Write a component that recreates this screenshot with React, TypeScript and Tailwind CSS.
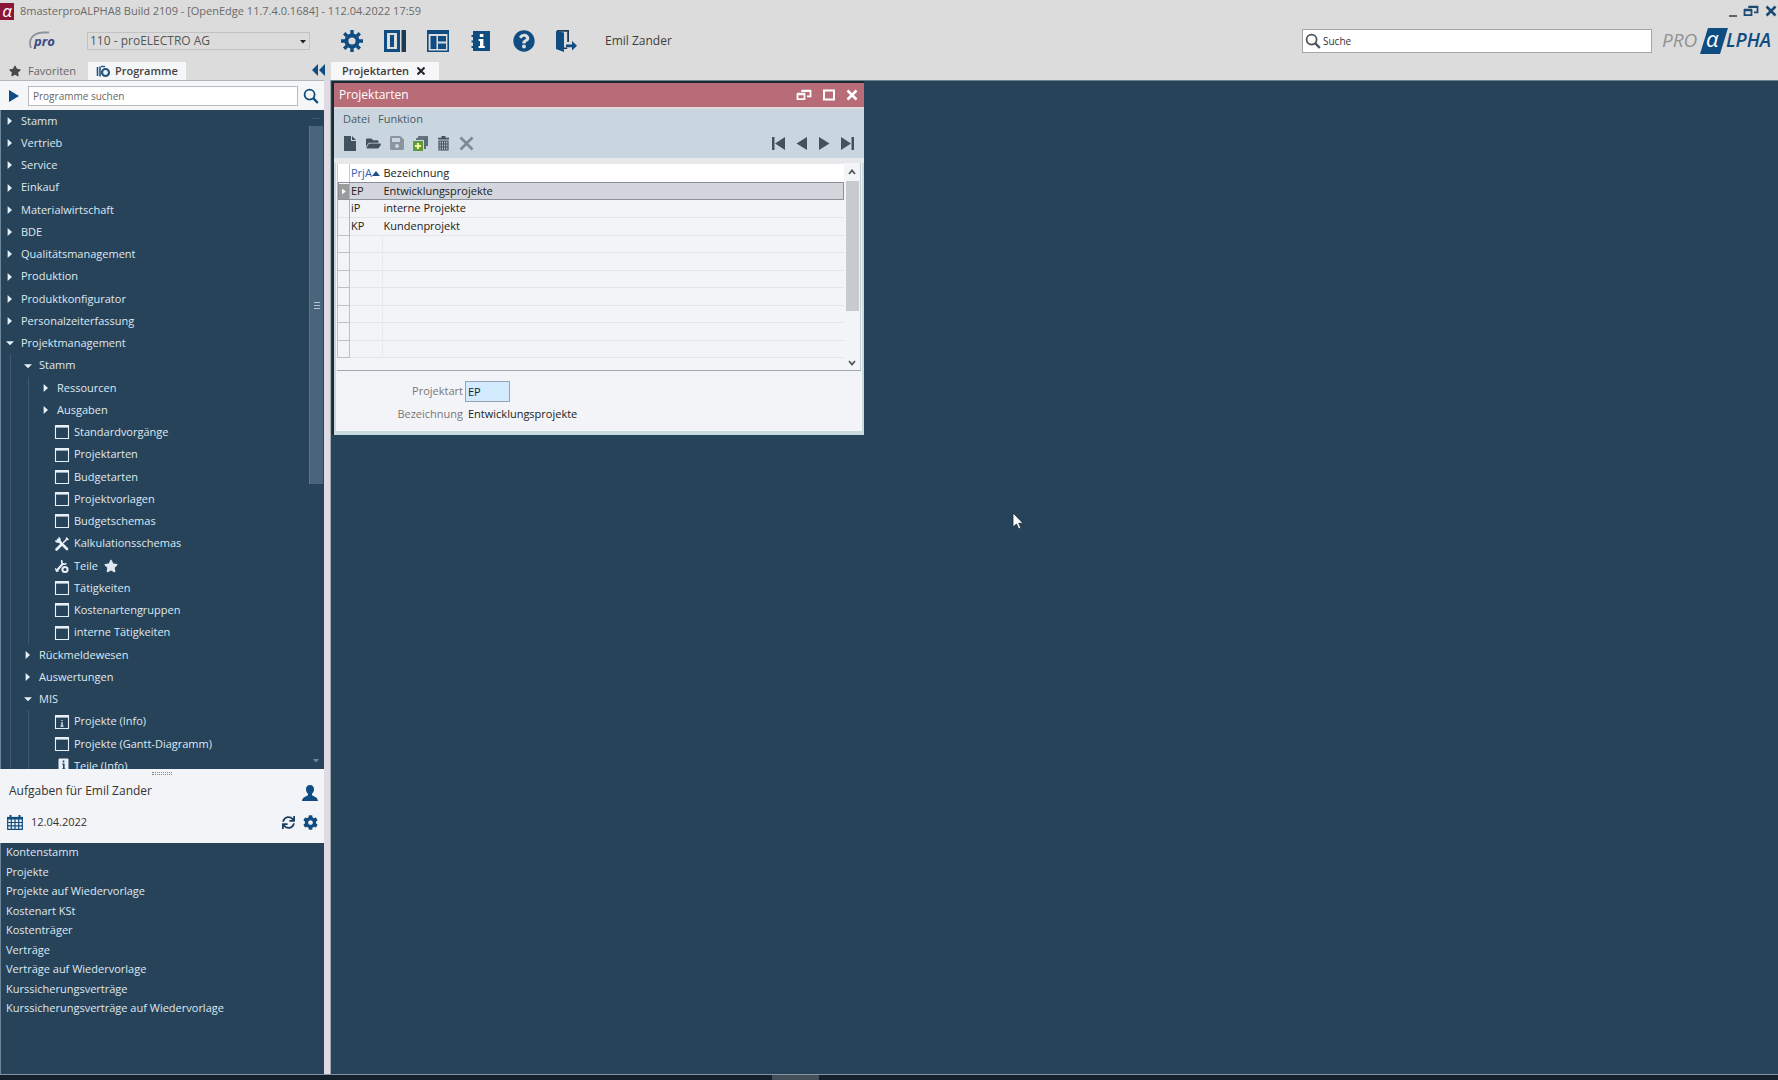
import React from "react";
import { FaCog, FaFolderOpen, FaQuestionCircle, FaSave, FaStar, FaSync } from "react-icons/fa";

type TreeKind = "closed" | "open" | "window" | "tools" | "parts" | "windowInfo" | "info";

type TreeItem = {
  label: string;
  level: number;
  kind: TreeKind;
  starred?: boolean;
};

const treeItems: TreeItem[] = [
  { label: "Stamm", level: 0, kind: "closed" },
  { label: "Vertrieb", level: 0, kind: "closed" },
  { label: "Service", level: 0, kind: "closed" },
  { label: "Einkauf", level: 0, kind: "closed" },
  { label: "Materialwirtschaft", level: 0, kind: "closed" },
  { label: "BDE", level: 0, kind: "closed" },
  { label: "Qualitätsmanagement", level: 0, kind: "closed" },
  { label: "Produktion", level: 0, kind: "closed" },
  { label: "Produktkonfigurator", level: 0, kind: "closed" },
  { label: "Personalzeiterfassung", level: 0, kind: "closed" },
  { label: "Projektmanagement", level: 0, kind: "open" },
  { label: "Stamm", level: 1, kind: "open" },
  { label: "Ressourcen", level: 2, kind: "closed" },
  { label: "Ausgaben", level: 2, kind: "closed" },
  { label: "Standardvorgänge", level: 2, kind: "window" },
  { label: "Projektarten", level: 2, kind: "window" },
  { label: "Budgetarten", level: 2, kind: "window" },
  { label: "Projektvorlagen", level: 2, kind: "window" },
  { label: "Budgetschemas", level: 2, kind: "window" },
  { label: "Kalkulationsschemas", level: 2, kind: "tools" },
  { label: "Teile", level: 2, kind: "parts", starred: true },
  { label: "Tätigkeiten", level: 2, kind: "window" },
  { label: "Kostenartengruppen", level: 2, kind: "window" },
  { label: "interne Tätigkeiten", level: 2, kind: "window" },
  { label: "Rückmeldewesen", level: 1, kind: "closed" },
  { label: "Auswertungen", level: 1, kind: "closed" },
  { label: "MIS", level: 1, kind: "open" },
  { label: "Projekte (Info)", level: 2, kind: "windowInfo" },
  { label: "Projekte (Gantt-Diagramm)", level: 2, kind: "window" },
  { label: "Teile (Info)", level: 2, kind: "info" },
];

const tasks = [
  "Kontenstamm",
  "Projekte",
  "Projekte auf Wiedervorlage",
  "Kostenart KSt",
  "Kostenträger",
  "Verträge",
  "Verträge auf Wiedervorlage",
  "Kurssicherungsverträge",
  "Kurssicherungsverträge auf Wiedervorlage",
];

const projectTypes = [
  { code: "EP", name: "Entwicklungsprojekte" },
  { code: "iP", name: "interne Projekte" },
  { code: "KP", name: "Kundenprojekt" },
];

const emptyRows = [0, 1, 2, 3, 4, 5, 6];

const ArrowIcon = ({ open }: { open: boolean }) => (
  <svg viewBox="0 0 10 10" className="h-[10px] w-[10px] shrink-0" fill="#e8f0f7">
    {open ? <path d="M1 3.2h8L5 7.2z" /> : <path d="M2.6 1v8L7 5z" />}
  </svg>
);

const LeafIcon = ({ kind }: { kind: TreeKind }) => (
  <svg viewBox="0 0 16 16" className="h-4 w-4 shrink-0" fill="none" stroke="#e8f0f7">
    {(kind === "window" || kind === "windowInfo") && (
      <>
        <path d="M1.5 1.5h13v13h-13z" strokeWidth="1.1" />
        <path d="M1 2.4h13" strokeWidth="2.4" />
      </>
    )}
    {kind === "windowInfo" && <path d="M8 6v1M8 8v4M6.5 12.2h3" strokeWidth="1.3" />}
    {kind === "tools" && (
      <>
        <path d="M4 4l9 9" strokeWidth="2.6" strokeLinecap="round" />
        <path d="M1.5 4.5a3 3 0 0 0 4 1M4.5 1.5a3 3 0 0 1 1.2 3.6" strokeWidth="1.6" />
        <path d="M2.5 13.5l5-5" strokeWidth="2.6" strokeLinecap="round" />
        <path d="M9 7l4.5-4.5M12 1.6l2.4 2.4" strokeWidth="1.6" />
      </>
    )}
    {kind === "parts" && (
      <>
        <path d="M2 13.5l7-8" strokeWidth="2" />
        <path d="M8 2.2a3 3 0 0 0 .8 3.6 3 3 0 0 0 3.6-.6" strokeWidth="1.6" />
        <circle cx="11" cy="11.5" r="2.6" strokeWidth="2" />
        <path d="M1 10.5l3.5 3" strokeWidth="1.4" />
      </>
    )}
    {kind === "info" && (
      <>
        <path d="M5 1h9v13H5z" fill="#e8f0f7" />
        <path d="M9.5 2.5v2M8.4 6.2h1.4V11M8 11.4h3.4" stroke="#27435a" strokeWidth="1.6" />
      </>
    )}
  </svg>
);

const SearchIcon = ({ color }: { color: string }) => (
  <svg viewBox="0 0 16 16" className="h-4 w-4 shrink-0" fill="none" stroke={color}>
    <circle cx="6.6" cy="6.6" r="5" strokeWidth="1.8" />
    <path d="M10.2 10.2l4.6 4.8" strokeWidth="2.4" />
  </svg>
);

const RestoreIcon = () => (
  <svg viewBox="0 0 16 12" className="h-3 w-4" fill="none" stroke="currentColor" strokeWidth="1.8">
    <path d="M1.5 5.2h7v5h-7zM5.5 2h9v5.4h-3.5" />
    <path d="M1 5h8M5.5 1.9h9.4" strokeWidth="2.4" />
  </svg>
);

const CloseIcon = () => (
  <svg viewBox="0 0 12 12" className="h-3 w-3" fill="none" stroke="currentColor" strokeWidth="2.6">
    <path d="M1.5 1.5l9 9M10.5 1.5l-9 9" />
  </svg>
);

const MainToolbar = () => (
  <nav aria-label="Werkzeuge" className="flex items-center gap-[21px] text-[#0f4c81]">
    <button aria-label="Einstellungen" className="flex h-[22px] w-[22px] items-center justify-center">
      <svg viewBox="0 0 22 22" className="h-[22px] w-[22px]" fill="none" stroke="currentColor">
        <circle cx="11" cy="11" r="5.6" strokeWidth="4" />
        <path
          d="M11 0v4M11 18v4M0 11h4M18 11h4M3.2 3.2L6 6M16 16l2.800 2.800M18.800 3.200L16 6M6 16l-2.800 2.800"
          strokeWidth="3.4"
        />
      </svg>
    </button>
    <button aria-label="Bereiche">
      <svg viewBox="0 0 22 22" className="h-[22px] w-[22px]" fill="currentColor">
        <path d="M0 0h16v22H0zM3 3v16h10V3z" fillRule="evenodd" />
        <path d="M6 5h4v12H6z" />
        <path d="M17.5 0H22v22h-4.5z" fill="#1d3a55" />
      </svg>
    </button>
    <button aria-label="Layout">
      <svg viewBox="0 0 22 22" className="h-[22px] w-[22px]" fill="currentColor">
        <path d="M0 0h22v22H0zM1.6 4v16.4h18.8V4z" fillRule="evenodd" />
        <path d="M3.5 6h6v13h-6zM11 6h8v5.5h-8zM11 13.5h8V19h-8z" />
      </svg>
    </button>
    <button aria-label="Information">
      <svg viewBox="0 0 22 22" className="h-[22px] w-[22px]" fill="currentColor">
        <path d="M3 1h17v20H3v-3H1.5v-2H3v-3.5H1.5v-2H3V7H1.5V5H3z" />
        <path d="M9.8 4h3.6v3H9.8zM8.6 9h4.8v7h1.4v2H8.6v-2H10v-5H8.6z" fill="#fff" />
      </svg>
    </button>
    <button aria-label="Hilfe" className="flex h-[22px] w-[22px] items-center justify-center">
      <FaQuestionCircle size={22} />
    </button>
    <button aria-label="Abmelden">
      <svg viewBox="0 0 22 22" className="h-[22px] w-[22px]" fill="currentColor">
        <path d="M0 1l8 1.500V22l-8-3z" />
        <path d="M1 0h12v12h-1.800V1.800H1zM8 17.500h3.200V19H8z" fill="#1d3a55" />
        <path d="M10 14.400h6V11l5 4.800-5 4.800v-3.400h-6z" />
      </svg>
    </button>
  </nav>
);

const Header = () => (
  <header className="shrink-0 bg-[#dcdcdc]">
    <div className="flex h-[22px] items-center justify-between text-[11px]">
      <div className="flex items-center gap-[6px]">
        <span className="flex h-[17px] w-[14px] items-center justify-center bg-[#8c1638] text-[17px] leading-[14px] italic text-white">
          α
        </span>
        <h1 className="whitespace-nowrap text-[#6a6a6a]">
          8masterproALPHA8 Build 2109 - [OpenEdge 11.7.4.0.1684] - 112.04.2022 17:59
        </h1>
      </div>
      <div className="flex items-center gap-[6px] pr-px text-[#1d4a75]">
        <button aria-label="Minimieren" className="flex h-3 w-2 items-end">
          <span className="h-[2px] w-2 bg-[#5b6570]" />
        </button>
        <button aria-label="Verkleinern">
          <RestoreIcon />
        </button>
        <button aria-label="Schließen">
          <CloseIcon />
        </button>
      </div>
    </div>

    <div className="flex h-[38px] items-center">
      <div className="flex w-[87px] shrink-0 justify-center pr-[2px]">
        <svg viewBox="0 0 30 20" className="h-5 w-[30px]">
          <path d="M3 17C0 9 4 2 15 1.5h6" fill="none" stroke="#8d949c" strokeWidth="1.8" />
          <text x="6" y="15" fontSize="13" fontWeight="700" fontStyle="italic" fill="#3a4a86">
            pro
          </text>
        </svg>
      </div>
      <div className="relative h-[18px] w-[223px] shrink-0">
        <select
          aria-label="Mandant"
          className="block h-full w-full appearance-none border border-[#c2c2c2] bg-[#dcdcdc] pl-[2px] text-xs leading-4 text-[#555]"
        >
          <option>110 - proELECTRO AG</option>
        </select>
        <svg viewBox="0 0 6 4" className="pointer-events-none absolute top-2 right-1 h-1 w-[6px]">
          <path d="M0 0h6L3 3.5z" fill="#222" />
        </svg>
      </div>
      <div className="pl-[31px]">
        <MainToolbar />
      </div>
      <span className="pl-[27px] text-xs text-[#3c3c3c]">Emil Zander</span>
      <div className="ml-auto flex items-center gap-[10px]">
        <label className="flex h-6 w-[350px] items-center gap-[2px] border border-[#a5a5a5] bg-white pl-[2px]">
          <SearchIcon color="#4a545c" />
          <input
            aria-label="Suche"
            placeholder="Suche"
            className="w-full bg-transparent text-[10px] outline-none placeholder:text-[#333]"
          />
        </label>
        <svg viewBox="0 0 116 28" className="h-7 w-[116px] overflow-visible" fontSize="19" fontStyle="italic">
          <path d="M46 1h20l-8 26H38z" fill="#0f4c81" />
          <text x="0" y="20" fill="#929292">
            PRO
          </text>
          <text x="44" y="20" fontSize="22" fill="#fff">
            α
          </text>
          <text x="64" y="20" fontWeight="600" fill="#0f4c81">
            LPHA
          </text>
        </svg>
      </div>
    </div>

    <div className="flex h-[20px] items-end text-[11px]">
      <div className="flex h-full w-[331px] shrink-0 items-end">
        <button className="flex h-[18px] w-[88px] items-center gap-[7px] pl-[9px] text-[#666]">
          <FaStar size={12} color="#4a4a4a" />
          Favoriten
        </button>
        <button className="flex h-[18px] w-[98px] items-center gap-1 bg-[#f5f6f8] pl-2 font-semibold text-[#444]">
          <svg viewBox="0 0 15 13" className="h-[13px] w-[15px]" fill="none" stroke="#24557f">
            <path d="M1.5 2v9M4 1.5v10" strokeWidth="1.6" />
            <circle cx="9.5" cy="7.5" r="3.5" strokeWidth="2.2" />
            <path d="M5 1.5h4" strokeWidth="1.4" />
          </svg>
          Programme
        </button>
        <button aria-label="Einklappen" className="mr-[6px] ml-auto pb-1">
          <svg viewBox="0 0 13 12" className="h-3 w-[13px]" fill="#0f4c81">
            <path d="M6 0v12L0 6zM13 0v12L7 6z" />
          </svg>
        </button>
      </div>
      <div className="flex h-[18px] w-[108px] items-center gap-2 bg-[#f7f7f9] pl-[11px]">
        <span className="font-semibold text-[#3c3c3c]">Projektarten</span>
        <button aria-label="Tab schließen" className="text-[#222]">
          <svg viewBox="0 0 8 8" className="h-2 w-2" stroke="currentColor" strokeWidth="2">
            <path d="M.5.5l7 7M7.5.5l-7 7" />
          </svg>
        </button>
      </div>
    </div>
  </header>
);

const TreeRow = ({ item, inProject }: { item: TreeItem; inProject: boolean }) => {
  const folder = item.kind === "closed" || item.kind === "open";
  return (
    <li className="h-[22px] nth-[4n]:h-[23px]">
      <button className="flex h-full items-center text-left whitespace-nowrap">
        {inProject &&
          Array.from({ length: item.level }, (_, i) => (
            <span key={i} className="flex h-full w-[18px] shrink-0 justify-center">
              <span className="w-px bg-[#3c5a73]" />
            </span>
          ))}
        {folder ? (
          <span className="flex w-5 shrink-0 pl-1">
            <ArrowIcon open={item.kind === "open"} />
          </span>
        ) : (
          <span className="flex w-[37px] shrink-0 pl-[17px]">
            <LeafIcon kind={item.kind} />
          </span>
        )}
        {item.label}
        {item.starred && <FaStar size={14} className="ml-[6px]" />}
      </button>
    </li>
  );
};

const Sidebar = () => (
  <aside className="flex w-[324px] shrink-0 flex-col text-[11px]">
    <div className="flex h-[30px] shrink-0 items-center border-t border-[#b5b5b5] bg-[#f5f6f8]">
      <button aria-label="Starten" className="flex w-7 justify-center">
        <svg viewBox="0 0 10 12" className="h-3 w-[10px]">
          <path d="M0 0v12l10-6z" fill="#0f4c81" />
        </svg>
      </button>
      <input
        aria-label="Programme suchen"
        placeholder="Programme suchen"
        className="h-5 min-w-0 flex-1 border border-[#b9b9c4] bg-white pl-1 text-[10px] outline-none placeholder:text-[#666]"
      />
      <button aria-label="Suchen" className="flex w-[26px] justify-center">
        <SearchIcon color="#0f4c81" />
      </button>
    </div>

    <div className="flex min-h-0 flex-1 border-l border-[#6d8597] bg-[#27435a] text-[#dfe8f0]">
      <ul className="min-h-0 flex-1 overflow-hidden">
        {treeItems.map((item, i) => (
          <TreeRow key={i} item={item} inProject={i > 10} />
        ))}
      </ul>
      <div className="flex w-[15px] shrink-0 flex-col pr-px">
        <div className="flex h-4 items-center justify-center">
          <span className="h-px w-2 bg-[#40596d]" />
        </div>
        <div className="flex h-[358px] flex-col items-center justify-center gap-[2px] border-l border-[#5d788d] bg-[#4a657b]">
          <span className="h-px w-[6px] bg-[#b4c4d1]" />
          <span className="h-px w-[6px] bg-[#b4c4d1]" />
          <span className="h-px w-[6px] bg-[#b4c4d1]" />
        </div>
        <svg viewBox="0 0 6 4" className="mx-auto mt-auto mb-[6px] h-1 w-[6px]">
          <path d="M0 0h6L3 3.5z" fill="#6f8799" />
        </svg>
      </div>
    </div>

    <section className="h-[74px] shrink-0 bg-[#f3f4f7] text-[#333]">
      <div className="flex h-2 items-center justify-center">
        <span className="h-[3px] w-5 border-y border-dotted border-[#888]" />
      </div>
      <div className="flex h-7 items-center justify-between pr-[6px] pl-[9px]">
        <h2 className="text-xs">Aufgaben für Emil Zander</h2>
        <svg viewBox="0 0 16 16" className="mt-1 h-4 w-4" fill="#0f4c81">
          <path d="M8 0c2.600 0 4 1.900 4 4.300 0 1.900-.9 3.700-2 4.500v1.500c1.300 1 5.500 1.500 6 5.700H0c.5-4.200 4.700-4.700 6-5.700V8.800C4.900 8 4 6.200 4 4.300 4 1.900 5.400 0 8 0z" />
        </svg>
      </div>
      <div className="flex h-[34px] items-center pr-[6px] pl-[7px]">
        <svg viewBox="0 0 16 15" className="h-[15px] w-4" fill="none" stroke="#0f4c81">
          <path d="M0 3.2h16" strokeWidth="2.6" />
          <path d="M3.5 0v3M12.5 0v3" strokeWidth="2" />
          <path d="M.7 4v10.3h14.6V4M0 7.5h16M0 10.8h16M4.3 4v10.5M8 4v10.5M11.7 4v10.5" strokeWidth="1.2" />
        </svg>
        <span className="pl-2">12.04.2022</span>
        <button aria-label="Aktualisieren" className="ml-auto text-[#1d3f60]">
          <FaSync size={13} />
        </button>
        <button aria-label="Aufgaben einstellen" className="pl-2 text-[#0f4c81]">
          <FaCog size={15} />
        </button>
      </div>
    </section>

    <ul className="h-[231px] shrink-0 border-l border-[#6d8597] bg-[#27435a] text-[#dfe8f0]">
      {tasks.map((task) => (
        <li key={task} className="h-[19px] even:h-5">
          <button className="flex h-full items-center pl-[5px] whitespace-nowrap">{task}</button>
        </li>
      ))}
    </ul>
  </aside>
);

const WindowToolbar = () => (
  <div className="flex h-[30px] items-center pr-[10px] pl-[9px] text-[#43525f]">
    <div className="flex items-center gap-2">
      <button aria-label="Neu">
        <svg viewBox="0 0 15 15" className="h-[15px] w-[15px]" fill="currentColor">
          <path d="M1 0h7v5h5v10H1zM9 0l4 4H9z" />
        </svg>
      </button>
      <button aria-label="Öffnen">
        <FaFolderOpen size={15} />
      </button>
      <button aria-label="Speichern" className="text-[#8a95a0]">
        <FaSave size={16} />
      </button>
      <button aria-label="Kopieren">
        <svg viewBox="0 0 15 15" className="h-[15px] w-[15px]">
          <path d="M5 1h9v9" fill="none" stroke="#43525f" strokeWidth="1.6" />
          <path d="M3 3h9v10" fill="none" stroke="#43525f" strokeWidth="1.6" />
          <path d="M0 5h10v10H0z" fill="#5f9a3c" />
          <path d="M5 7v6M2 10h6" stroke="#f3f59a" strokeWidth="2.2" />
        </svg>
      </button>
      <button aria-label="Löschen">
        <svg viewBox="0 0 15 15" className="h-[15px] w-[15px]" fill="none" stroke="currentColor">
          <path d="M2 2.6h11M5.5 1h4" strokeWidth="1.8" />
          <path d="M3 5h9v9H3zM5.3 5v9M7.5 5v9M9.7 5v9M3 8h9M3 11h9" strokeWidth="1.2" />
        </svg>
      </button>
      <button aria-label="Abbrechen" className="text-[#7d8891]">
        <svg viewBox="0 0 15 15" className="h-[15px] w-[15px]" stroke="currentColor" strokeWidth="2.6">
          <path d="M1.5 1.5l12 12M13.5 1.5l-12 12" />
        </svg>
      </button>
    </div>
    <div className="ml-auto flex items-center gap-[10px]">
      <button aria-label="Erster">
        <svg viewBox="0 0 13 13" className="h-[13px] w-[13px]" fill="currentColor">
          <path d="M0 0h2.5v13H0zM13 0v13L3 6.5z" />
        </svg>
      </button>
      <button aria-label="Vorheriger">
        <svg viewBox="0 0 13 13" className="h-[13px] w-[13px]" fill="currentColor">
          <path d="M12 0v13L1.5 6.5z" />
        </svg>
      </button>
      <button aria-label="Nächster">
        <svg viewBox="0 0 13 13" className="h-[13px] w-[13px]" fill="currentColor">
          <path d="M1 0v13l10.5-6.5z" />
        </svg>
      </button>
      <button aria-label="Letzter">
        <svg viewBox="0 0 13 13" className="h-[13px] w-[13px]" fill="currentColor">
          <path d="M10.5 0H13v13h-2.5zM0 0v13l10-6.5z" />
        </svg>
      </button>
    </div>
  </div>
);

const ProjectTable = () => (
  <div className="flex h-[208px] border-b border-[#a3a8b3]">
    <div className="min-w-0 flex-1 border-t border-[#e9e9ec]">
      <table className="w-full table-fixed border-collapse text-left text-[11px] leading-4 text-[#222]">
        <thead>
          <tr className="h-[18px] bg-white">
            <th className="w-3 border-x border-[#c8c8cc]" />
            <th className="w-[33px] pl-px font-normal text-[#2f62b5]">
              <span className="flex items-center whitespace-nowrap">
                PrjA
                <svg viewBox="0 0 8 5" className="h-[5px] w-2 shrink-0">
                  <path d="M0 5h8L4 0z" fill="#1f4f86" />
                </svg>
              </span>
            </th>
            <th className="pl-px font-normal">Bezeichnung</th>
          </tr>
        </thead>
        <tbody>
          {projectTypes.map((row, i) => (
            <tr
              key={row.code}
              className={
                i === 0
                  ? "h-[18px] bg-[#d3d7dd] outline outline-[#8b9099] -outline-offset-1"
                  : "h-[18px] border-b border-[#e4e5e9] even:h-[17px]"
              }
            >
              <td className="border-x border-[#b4b4b8] bg-[#f3f4f7] text-center">
                {i === 0 && (
                  <svg viewBox="0 0 11 16" className="block h-[15px] w-full bg-[#9c9c9f]">
                    <path d="M4 5v6l4-3z" fill="#fff" />
                  </svg>
                )}
              </td>
              <td className="pl-px">{row.code}</td>
              <td className="pl-px">{row.name}</td>
            </tr>
          ))}
          {emptyRows.map((row) => (
            <tr key={row} className="h-[18px] border-b border-[#e4e5e9] even:h-[17px]">
              <td className="border border-[#c0c0c4]" />
              <td className="border-r border-r-[#e9eaed]" />
              <td />
            </tr>
          ))}
        </tbody>
      </table>
    </div>
    <div className="flex w-[17px] shrink-0 flex-col items-center border-r border-[#c3cdd4] text-[#555]">
      <svg viewBox="0 0 8 6" className="my-[6px] h-[6px] w-2" fill="none" stroke="currentColor" strokeWidth="1.8">
        <path d="M1 5l3-3.5L7 5" />
      </svg>
      <div className="h-[130px] w-[13px] bg-[#c9cacf]" />
      <svg viewBox="0 0 8 6" className="mt-auto mb-1 h-[6px] w-2" fill="none" stroke="currentColor" strokeWidth="1.8">
        <path d="M1 1l3 3.5L7 1" />
      </svg>
    </div>
  </div>
);

const ProjectWindow = () => (
  <section className="w-[532px] border-t-2 border-l-2 border-[#1c2933]">
    <div className="flex h-[24px] items-center bg-[#b76c78] pr-[6px] pl-[5px] text-white">
      <h2 className="text-xs">Projektarten</h2>
      <div className="ml-auto flex items-center gap-[11px]">
        <button aria-label="Fenster verkleinern">
          <RestoreIcon />
        </button>
        <button aria-label="Fenster maximieren">
          <svg viewBox="0 0 12 12" className="h-3 w-3" fill="none" stroke="currentColor" strokeWidth="2">
            <path d="M1 1.5h10v9H1z" />
          </svg>
        </button>
        <button aria-label="Fenster schließen">
          <CloseIcon />
        </button>
      </div>
    </div>
    <div className="border-t-2 border-[#e3d9dd] bg-[#c9d6df]">
      <div className="flex h-[19px] items-center gap-2 pt-[2px] pl-[9px] text-[11px] text-[#4c5963]">
        <button>Datei</button>
        <button>Funktion</button>
      </div>
      <WindowToolbar />
      <div className="h-[5px] bg-[#e6e8ea]" />
    </div>
    <div className="border-x-2 border-b-4 border-[#c9d9de] bg-[#f3f4f7] px-px">
      <ProjectTable />
      <form className="flex h-[60px] flex-col gap-px pt-[10px] text-[11px]">
        <div className="flex h-[21px] items-center gap-[2px]">
          <label htmlFor="projektart" className="w-[126px] text-right text-[#777]">
            Projektart
          </label>
          <input
            id="projektart"
            defaultValue="EP"
            className="h-[21px] w-[45px] border border-[#9aa0b8] bg-[#d3ebff] pl-[2px] text-[#222] outline-none"
          />
        </div>
        <div className="flex h-[22px] items-center gap-[2px]">
          <label htmlFor="bezeichnung" className="w-[126px] text-right text-[#777]">
            Bezeichnung
          </label>
          <output id="bezeichnung" className="pl-[3px] text-[#222]">
            Entwicklungsprojekte
          </output>
        </div>
      </form>
    </div>
  </section>
);

const App = () => {
  return (
    <div className="flex h-screen flex-col overflow-hidden bg-[#27435a] font-['Open_Sans',sans-serif]">
      <Header />
      <div className="flex min-h-0 flex-1">
        <Sidebar />
        <div className="w-[7px] shrink-0 border-r border-[#9fa9b2] bg-[#e0dbe2]" />
        <main className="relative min-w-0 flex-1 border-t border-[#6c8291] bg-[#27435a] pl-px">
          <ProjectWindow />
          {/* mouse pointer */}
          <svg viewBox="0 0 12 18" className="absolute top-[431px] left-[681px] h-[18px] w-3">
            <path d="M1 1v14l3.5-3 2.2 5 2.2-1-2.2-4.8H11z" fill="#fff" stroke="#1c2933" strokeWidth=".8" />
          </svg>
        </main>
      </div>
      <footer className="flex h-[6px] shrink-0 justify-center border-t border-[#8393a1] bg-[#14212d]">
        <span className="mr-[187px] h-full w-[47px] bg-[#444f59]" />
      </footer>
    </div>
  );
};

export default App;
